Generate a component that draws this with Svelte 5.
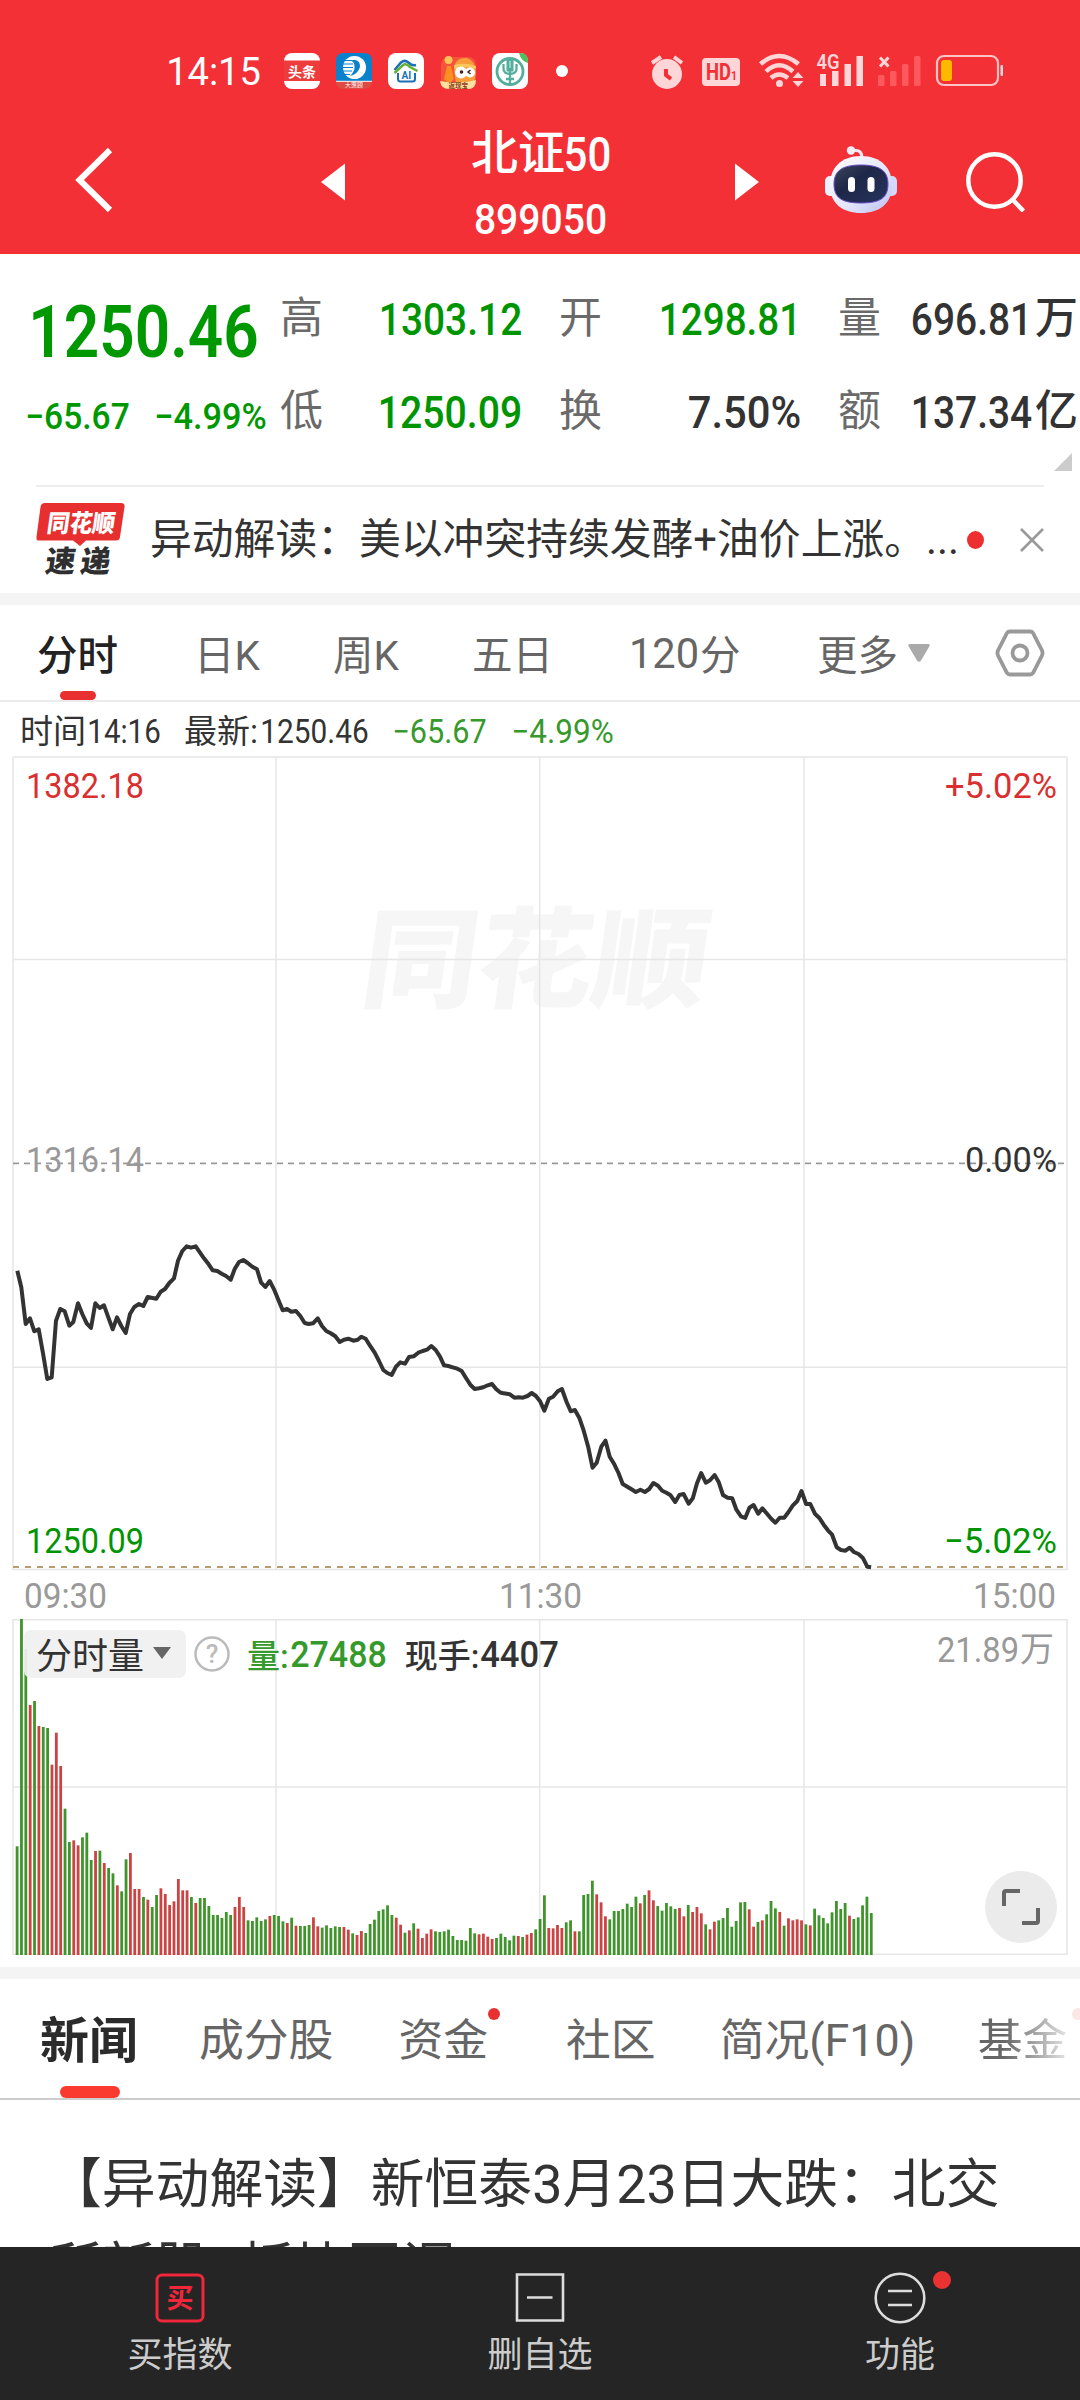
<script>
  const stats = [
    { label: '高', value: '1303.12', w: 139, tone: 'down' },
    { label: '开', value: '1298.81', w: 138, tone: 'down' },
    { label: '量', value: '696.81', w: 117, unit: '万' },
    { label: '低', value: '1250.09', w: 140, tone: 'down' },
    { label: '换', value: '7.50%', w: 109 },
    { label: '额', value: '137.34', w: 117, unit: '亿' }
  ];

  // Minute prices as chart coordinates (x, y), three units to a pixel.
  const morning = '52,212 64,262 77,372 90,355 103,394 116,388 129,460 142,537 155,532 168,362 181,327 194,334 208,377 220,366 234,310 247,342 260,370 273,384 286,310 299,324 312,316 325,352 338,388 351,352 364,378 377,399 390,342 403,321 417,312 430,318 443,291 469,296 482,275 495,267 508,249 522,235 534,182 547,153 560,139 573,143 587,139 612,175 626,193 638,211 652,213 665,221 678,228 692,239 704,207 717,186 730,180 743,189 757,200 771,208 783,247 796,261 809,243 822,268 835,299 848,331 861,327 874,335 888,333 901,348 914,369 926,372 939,370 953,355 966,378 979,393 992,400 1006,409 1019,426 1032,419 1045,416 1060,422 1073,419 1084,410 1097,416 1110,437 1124,458 1137,483 1150,510 1162,519 1175,525 1188,500 1201,487 1215,491 1227,471 1241,469 1255,458 1268,453 1281,449 1294,438 1307,450 1320,470 1332,496 1345,498 1358,502 1372,506 1385,513 1398,534 1411,554 1424,567 1437,565 1450,562 1463,556 1476,552 1489,568 1500,577'
    .split(' ').map((p) => p.split(',').map(Number)).map(([x, y]) => [x / 3, y / 3]);
  const afternoon = '58,579 78,583 90,593 101,592 112,593 124,588 135,579 146,588 157,604 168,632 180,596 191,590 203,574 214,567 226,605 237,634 248,630 260,655 271,692 283,742 294,803 305,788 317,740 328,722 339,770 351,793 362,819 373,852 385,860 396,868 407,876 419,869 431,876 442,867 453,849 465,857 476,872 487,878 498,886 510,906 521,885 532,882 545,911 556,895 567,850 578,819 590,848 601,841 613,825 624,847 635,885 647,893 659,895 670,929 682,949 693,954 704,923 715,915 727,941 738,925 749,940 761,956 772,968 783,953 795,953 806,936 817,917 829,903 840,873 852,912 863,912 875,941 886,953 898,974 909,991 920,1004 932,1042 943,1050 955,1052 966,1043 977,1056 989,1062 1000,1073 1012,1100 1022,1102'
    .split(' ').map((p) => p.split(',').map(Number)).map(([x, y]) => [480 + x / 2.613, y / 3]);
  const priceLine = [...morning, ...afternoon]
    .map(([x, y]) => x.toFixed(1) + ',' + (y + 450).toFixed(1))
    .join(' ');

  // Volume bars: top edge in thirds of a pixel, then the direction.
  const volumes = '769g 87g 177g 345r 333g 408r 411g 414g 524r 428r 528r 656g 756g 751r 766r 742g 728g 810g 783r 782g 819r 834g 850g 886r 904g 808g 789r 897r 897r 921g 929r 951g 915g 895r 912r 945r 934r 867r 901r 901r 921g 939r 924g 924g 948g 975g 975g 984g 966g 975g 951r 921r 951r 991g 993g 982g 993g 988g 978r 975g 978g 994g 999r 983g 1007r 1008g 1008g 1005g 982r 1009r 1013g 1006g 1014g 1009g 1011g 1011r 1019r 1030g 1035r 1023r 1029g 1002g 989g 963g 958g 946g 975g 983r 1004r 1028g 1021r 1000g 1016r 1044r 1031r 1018r 1024g 1026g 1024g 1019g 1038g 1050g 1050g 1052g 1014g 1030g 1033r 1031r 1040r 1047r 1044g 1031g 1041g 1051g 1037g 1038r 1041g 1034r 1029r 1018g 987g 916g 1014r 1015r 1005r 1014r 997g 991g 1024r 1024g 915g 912g 872g 913r 937r 979r 988g 963g 963g 957g 941g 951g 920g 940r 915g 901r 931r 948g 962g 939g 949g 957g 954r 979r 945g 966r 951r 970r 1003g 1018r 995r 991g 984g 954g 1010g 993g 937g 936g 958r 1010r 996g 991r 973g 933g 955g 966r 1007g 985r 991r 988r 991r 1003g 1006r 956g 976g 984g 1000g 967g 933g 957g 939g 977r 987g 982g 946g 920g 969g'
    .split(' ')
    .map((v, i) => ({
      x: 15.7 + i * 4.358,
      y: parseInt(v) / 3 - 29,
      color: v.endsWith('r') ? '#cc4343' : '#3f952b'
    }));
</script>

<!-- Condensed figures: the box is exactly the ink of the digits. -->
{#snippet num(text, w, cap, weight = 500)}
  <svg class="num" width={w} height={cap}>
    <text
      x={-cap * 0.07}
      y={cap}
      font-size={cap / 0.711}
      font-weight={weight}
      textLength={w + cap * 0.14}
      lengthAdjust="spacingAndGlyphs">{text}</text>
  </svg>
{/snippet}

{#snippet axis(text, x, y, w, color)}
  <text class="axis" {x} {y} fill={color} textLength={w} lengthAdjust="spacingAndGlyphs">{text}</text>
{/snippet}

<main class="screen">
  <header class="top">
    <div class="status">
      <div class="clock">{@render num('14:15', 91, 27, 400)}</div>
      <div class="apps">
        <svg width="36" height="36" viewBox="0 0 36 36">
          <rect width="36" height="36" rx="8" fill="#fff" />
          <rect y="7.500" width="36" height="20.500" fill="#ee3b3b" />
          <text x="4" y="23.500" font-size="14" font-weight="700" fill="#fff">头条</text>
        </svg>
        <svg width="36" height="36" viewBox="0 0 36 36">
          <path d="M8 0H28Q36 0 36 8V28H0V8Q0 0 8 0Z" fill="#0a82cb" />
          <path d="M0 28H36Q36 36 28 36H8Q0 36 0 28Z" fill="#dd4b43" />
          <path d="M0 28.300H36" stroke="#fff" />
          <circle cx="18.500" cy="14.500" r="11.500" fill="#fff" />
          <path d="M15 7H19Q24.500 8 24 14Q22 21 14 23Q19 18 18.500 13Q18 9 15 7Z" fill="#0a82cb" />
          <path d="M7 7.500H16M6 11H17M6 14.500H17M7 18H16M9 21.500H14" stroke="#0a82cb" stroke-width="1.200" />
          <text x="9" y="34.300" font-size="6" fill="#fff">大惠顾</text>
        </svg>
        <svg width="36" height="36" viewBox="0 0 36 36">
          <rect width="36" height="36" rx="8" fill="#fff" />
          <path d="M6.500 17L13 9.500Q17 6 21 10Q24 13 28 12" fill="none" stroke="#1b70b8" stroke-width="2.500" />
          <path d="M6.500 20L15 12Q18 10 22 14L29.500 18" fill="none" stroke="#65b232" stroke-width="2.500" />
          <path d="M10 20V26Q10 28.500 12.500 28.500H24.500Q27 28.500 27 26V20" fill="none" stroke="#1b70b8" stroke-width="2" />
          <text x="13.500" y="25.500" font-size="10" font-weight="700" fill="#1b70b8">AI</text>
        </svg>
        <svg width="36" height="36" viewBox="0 0 36 36">
          <rect x="1" y="4" width="35" height="32" rx="8" fill="#f5543a" />
          <path d="M14 18Q14 4 27 5Q36 8 36 20L34 30H16Z" fill="#f79d3a" />
          <path d="M14 12Q24 9 36 13V16Q24 12 14 16Z" fill="#fbc75c" />
          <circle cx="8.500" cy="7" r="4" fill="#fdc35a" />
          <path d="M7 13L4 26L9 31L14 26L11 13Z" fill="#fb8f21" />
          <circle cx="21" cy="19.500" r="6" fill="#fff" />
          <circle cx="30" cy="19.500" r="5" fill="#fff" />
          <circle cx="21.500" cy="19" r="1.800" fill="#3a2518" />
          <path d="M30.500 17L28 19L30.500 21" fill="none" stroke="#3a2518" stroke-width="1.500" />
          <path d="M0 28Q18 32 36 27Q36 36 28 36H9Q1 36 0 28Z" fill="#fce0a0" />
          <text x="8.500" y="34.800" font-size="6.500" font-weight="700" fill="#8b3d18">返现宝</text>
        </svg>
        <svg width="36" height="36" viewBox="0 0 36 36">
          <rect width="36" height="36" rx="8" fill="#fff" />
          <path d="M27 0H28Q36 0 36 8V10Q29 8 27 0Z" fill="#52bd5c" />
          <circle cx="18" cy="18.500" r="13" fill="none" stroke="#53ae9c" stroke-width="2.800" />
          <rect x="14.500" y="6" width="7" height="12.500" fill="#53ae9c" />
          <path d="M18 16V32M11.500 11V16Q11.500 20.500 18 21Q24.500 20.500 24.500 16V11M14 26H22" fill="none" stroke="#53ae9c" stroke-width="2.300" />
          <path d="M18 8V15" stroke="#d5f0ea" stroke-width="1" />
        </svg>
      </div>
      <i class="more-dot"></i>
      <svg class="system" width="360" height="40" viewBox="648 51 360 40" fill="#ffd6d7">
        <circle cx="667" cy="74" r="15" />
        <path d="M652 63L661 57M674 57L682 63" stroke="#ffd6d7" stroke-width="4" />
        <path d="M666 69V75L671 79" fill="none" stroke="#f23036" stroke-width="4" />
        <rect x="702" y="58" width="38" height="28" rx="4" />
        <text x="706" y="80" font-size="23" font-weight="700" fill="#f23036" textLength="25" lengthAdjust="spacingAndGlyphs">HD</text>
        <text x="731" y="80" font-size="13" font-weight="700" fill="#f23036" textLength="6" lengthAdjust="spacingAndGlyphs">1</text>
        <g fill="none" stroke="#ffd6d7" stroke-width="4.500">
          <path d="M760.500 64Q779 48 798.500 64" />
          <path d="M766 71.500Q779 59 793 71.500" />
          <path d="M771 78Q779 71 788 78" />
        </g>
        <circle cx="779.500" cy="83.500" r="3.500" />
        <path d="M792.500 78L798 72L803.500 78ZM792.500 81L798 87L803.500 81Z" />
        <text x="816.500" y="69" font-size="20.500" font-weight="600" textLength="23" lengthAdjust="spacingAndGlyphs">4G</text>
        <rect x="820" y="74" width="6" height="12" /><rect x="832" y="71" width="6.500" height="15" />
        <rect x="844.500" y="64" width="6.500" height="22" /><rect x="856.500" y="56" width="6.500" height="30" />
        <path d="M880 57.500L888.500 66.500M888.500 57.500L880 66.500" stroke="#ffd6d7" stroke-width="3" />
        <g fill="#ff595e">
          <rect x="878" y="75" width="6.500" height="11" rx="1.500" /><rect x="890" y="71" width="6.500" height="15" rx="1.500" />
          <rect x="902" y="64" width="6.500" height="22" rx="1.500" /><rect x="914" y="56" width="6.500" height="30" rx="1.500" />
        </g>
        <rect x="937" y="56" width="61" height="29" rx="7" fill="none" stroke="#ffc3c5" stroke-width="2.200" />
        <rect x="1000.500" y="65" width="2.500" height="11" rx="1" />
        <rect x="941" y="60" width="11" height="21" rx="3" fill="#ffba00" />
      </svg>
    </div>

    <nav class="nav">
      <svg class="back" width="40" height="66" viewBox="0 0 40 66">
        <path d="M35 3L4.500 33L35 63" fill="none" stroke="#fff" stroke-width="6" />
      </svg>
      <svg class="prev" width="24" height="38" viewBox="0 0 24 38"><path d="M0 19L24 0.500V37.500Z" fill="#fff" /></svg>
      <div class="title">
        <div class="name"><span>北证</span>{@render num('50', 43, 34)}</div>
        {@render num('899050', 129, 30)}
      </div>
      <svg class="next" width="24" height="38" viewBox="0 0 24 38"><path d="M24 19L0 0.500V37.500Z" fill="#fff" /></svg>
      <svg class="bot" width="72" height="68" viewBox="0 0 72 68">
        <defs>
          <linearGradient id="shell" x1="0" y1="0" x2="1" y2="1">
            <stop offset="0" stop-color="#fff" /><stop offset=".6" stop-color="#e2e4fa" /><stop offset="1" stop-color="#b9bff6" />
          </linearGradient>
          <linearGradient id="visor" x1="0" y1="0" x2="1" y2="1">
            <stop offset="0" stop-color="#3c465c" /><stop offset=".4" stop-color="#1e2747" /><stop offset="1" stop-color="#27345f" />
          </linearGradient>
        </defs>
        <path d="M37 12Q37 4 30 4.500" fill="none" stroke="#f1e9f6" stroke-width="3" />
        <circle cx="26" cy="4.500" r="4.200" fill="#f5eef8" />
        <rect x="0" y="30" width="12" height="20" rx="5" fill="#edf1ff" />
        <rect x="60" y="30" width="12" height="20" rx="5" fill="#d3d8fc" />
        <path d="M36 10C56 10 67 22 67 39C67 58 54 67 36 67C18 67 5 58 5 39C5 22 16 10 36 10Z" fill="url(#shell)" />
        <path d="M36 19C55 19 63 25 63 38C63 52 55 57 36 57C17 57 9 52 9 38C9 25 17 19 36 19Z" fill="url(#visor)" stroke="#6b4fc8" stroke-width="1" />
        <rect x="23" y="31" width="7" height="15" rx="3.500" fill="#fff" />
        <rect x="42.500" y="31" width="7" height="15" rx="3.500" fill="#fff" />
      </svg>
      <svg class="search" width="60" height="60" viewBox="0 0 60 60" fill="none" stroke="#fff" stroke-width="4.500">
        <circle cx="28.500" cy="28.500" r="26.200" />
        <path d="M47 48L57.500 59" />
      </svg>
    </nav>
  </header>

  <section class="quote">
    <div class="price">
      {@render num('1250.46', 223, 52, 600)}
      <div class="change">
        {@render num('−65.67', 101, 26)}
        {@render num('−4.99%', 109, 26)}
      </div>
    </div>
    <div class="stats">
      {#each stats as s}
        <div class="stat">
          <span class="key">{s.label}</span>
          <span class="value {s.tone ?? ''}">{@render num(s.value, s.w, 32)}{#if s.unit}<b>{s.unit}</b>{/if}</span>
        </div>
      {/each}
    </div>
    <svg class="corner" width="18" height="18"><path d="M18 0V18H0Z" fill="#ccc" /></svg>
  </section>

  <section class="flash">
    <svg class="brand" width="90" height="74" viewBox="0 0 90 74">
      <path d="M9 0H85Q89 0 88.500 4L84 34Q83.500 37.500 80 37.500H50L44 43L37 37.500H3Q0 37.500 0.500 34L4.500 4Q5 0 9 0Z" fill="#e72f30" />
      <text class="slant" x="10" y="28.500" font-size="24.500" fill="#fff" textLength="68" lengthAdjust="spacingAndGlyphs" transform="translate(4 0) skewX(-8)">同花顺</text>
      <text class="slant" font-size="30" y="69.500" fill="#2f2f31" textLength="65" transform="translate(18 0) skewX(-8)">速递</text>
    </svg>
    <p>异动解读：美以冲突持续发酵+油价上涨。...</p>
    <i class="red-dot"></i>
    <svg class="close" width="24" height="24"><path d="M1 1L23 23M23 1L1 23" stroke="#999" stroke-width="2.600" /></svg>
  </section>

  <nav class="periods">
    <span class="active">分时</span>
    <span class="p2">日K</span>
    <span class="p3">周K</span>
    <span class="p4">五日</span>
    <span class="p5">{@render num('120', 66, 30, 400)}分</span>
    <span class="p6">更多<svg width="22" height="18"><path d="M2 0H20Q23 0 21 3L13 16.500Q11 19 9 16.500L1 3Q-1 0 2 0Z" fill="#aaa" /></svg></span>
    <svg class="gear" width="50" height="48" viewBox="0 0 50 48" fill="none" stroke="#999" stroke-width="3.800">
      <path d="M15 2.500H35Q37 2.500 38 4L47 21.500Q48 24 47 26.500L38 44Q37 45.500 35 45.500H15Q13 45.500 12 44L3 26.500Q2 24 3 21.500L12 4Q13 2.500 15 2.500Z" />
      <circle cx="25" cy="24" r="7.500" />
    </svg>
  </nav>

  <div class="readout">
    <span>时间</span>{@render num('14:16', 70, 24, 450)}
    <span class="latest">最新:</span>{@render num('1250.46', 105, 24, 450)}
    <div class="delta">{@render num('−65.67', 91, 24, 450)}{@render num('−4.99%', 99, 24, 450)}</div>
  </div>

  <svg class="price-chart" width="1080" height="869" viewBox="0 0 1080 869">
    <text class="watermark" x="360" y="249.500" textLength="346" lengthAdjust="spacingAndGlyphs" transform="translate(33 0) skewX(-8)">同花顺</text>
    <g stroke="#e6e6e6" stroke-width="1.500" fill="none">
      <rect x="13" y="7" width="1054" height="812.500" />
      <path d="M276 7V819M539.700 7V819M804 7V819M13 209.500H1067M13 617.300H1067" />
    </g>
    <path d="M13 413.300H1064" stroke="#999" stroke-width="1.800" stroke-dasharray="6 5" />
    <path d="M13 817H1064" stroke="#b99c72" stroke-width="2" stroke-dasharray="6 6" />
    <polyline points={priceLine} fill="none" stroke="#333" stroke-width="4" stroke-linejoin="round" />
    {@render axis('1382.18', 26, 48, 118, '#d92f2f')}
    {@render axis('+5.02%', 945, 48, 112, '#d92f2f')}
    {@render axis('1316.14', 26, 421.5, 118, '#999')}
    {@render axis('0.00%', 965, 421.5, 92, '#333')}
    {@render axis('1250.09', 26, 802.5, 118, '#009500')}
    {@render axis('−5.02%', 944, 802.5, 113, '#009500')}
    {@render axis('09:30', 24, 857.500, 83, '#999')}
    {@render axis('11:30', 499, 857.500, 83, '#999')}
    {@render axis('15:00', 973, 857.500, 83, '#999')}
  </svg>

  <section class="volume">
    <svg width="1080" height="337" viewBox="0 0 1080 337">
      <g stroke="#e6e6e6" stroke-width="1.500" fill="none">
        <rect x="13" y="0.750" width="1054" height="334.500" />
        <path d="M276 0V335M539.700 0V335M804 0V335M13 168H1067" />
      </g>
      {#each volumes as v}
        <rect x={v.x} y={v.y} width="2.800" height={336 - v.y} fill={v.color} />
      {/each}
      {@render axis('21.89', 937, 42.500, 82, '#999')}
      <text x="1020" y="41.500" font-size="34" fill="#999">万</text>
    </svg>
    <div class="legend">
      <span class="picker">分时量<svg width="18" height="12"><path d="M0 0H18L9 12Z" fill="#666" /></svg></span>
      <svg class="help" width="36" height="36">
        <circle cx="18" cy="18" r="16.500" fill="none" stroke="#bbb" stroke-width="2.500" />
        <text x="18" y="27" text-anchor="middle" font-size="26" fill="#bbb">?</text>
      </svg>
      <span class="vol">量:{@render num('27488', 93, 26)}</span>
      <span class="hand">现手:{@render num('4407', 75, 26)}</span>
    </div>
    <button class="expand" aria-label="全屏">
      <svg width="40" height="38" viewBox="0 0 40 38" fill="none" stroke="#666" stroke-width="4">
        <path d="M3 18V5Q3 3 5 3H19M37 20V33Q37 35 35 35H21" />
      </svg>
    </button>
  </section>

  <nav class="tabs">
    <span class="active">新闻</span>
    <span class="t2">成分股</span>
    <span class="t3">资金<i></i></span>
    <span class="t4">社区</span>
    <span class="t5">简况(F10)</span>
    <span class="t6">基金<i></i></span>
  </nav>

  <article class="news">【异动解读】新恒泰3月23日大跌：北交<br />所新股+板块回调</article>

  <footer class="actions">
    <div>
      <svg width="54" height="54" viewBox="0 0 54 54">
        <rect x="4" y="4" width="46" height="46" rx="5" fill="none" stroke="#f0273b" stroke-width="3" />
        <text x="27" y="37" text-anchor="middle" font-size="27" font-weight="700" fill="#f0273b">买</text>
      </svg>
      <span>买指数</span>
    </div>
    <div>
      <svg width="54" height="54" viewBox="0 0 54 54" fill="none" stroke="#ddd" stroke-width="2.600">
        <path d="M4 3.500H50V49.500H4ZM14 26.500H39.500" />
      </svg>
      <span>删自选</span>
    </div>
    <div>
      <svg width="54" height="54" viewBox="0 0 54 54" fill="none" stroke="#ddd" stroke-width="2.600">
        <circle cx="27" cy="27" r="24.300" />
        <path d="M15 20H39M15 34H39" />
      </svg>
      <i></i>
      <span>功能</span>
    </div>
  </footer>
</main>

<style>
  :global(body) { background: #fff; }
  .screen {
    width: 1080px;
    height: 2400px;
    overflow: hidden;
    display: flex;
    flex-direction: column;
    background: #fff;
    color: #333;
    font-family: Roboto, 'Noto Sans CJK SC', sans-serif;
  }
  .screen > * { flex: none; box-sizing: border-box; }
  svg { display: block; flex: none; }
  i { display: block; border-radius: 50%; }
  .num { overflow: visible; fill: currentColor; font-family: Roboto, sans-serif; }
  .axis { font: 450 35px Roboto, sans-serif; }

  .top { height: 254px; background: #f23036; color: #fff; }
  .status { display: flex; align-items: center; height: 36px; padding-top: 53px; }
  .clock { margin-left: 168px; }
  .apps { display: flex; gap: 16px; margin-left: 25px; }
  .more-dot { width: 12px; height: 12px; margin-left: 28px; background: #fff; }
  .system { margin-left: 80px; }
  .nav { display: flex; align-items: center; height: 148px; padding-top: 17px; }
  .back { margin-left: 75px; }
  .prev { margin: 4px 0 0 206px; }
  .title {
    width: 200px;
    margin: 0 95px;
    display: flex;
    flex-direction: column;
    align-items: center;
    gap: 26px;
    padding-top: 4px;
  }
  .name { display: flex; align-items: center; gap: 1px; height: 48px; font-size: 47px; line-height: 48px; font-weight: 500; }
  .name span { margin-top: -2px; }
  .next { margin-top: 4px; }
  .bot { margin-left: 66px; }
  .search { margin-left: 69px; margin-top: 4px; }

  .quote { height: 231px; display: grid; grid-template-columns: 280px 1fr; position: relative; }
  .price { color: #009800; padding: 51px 0 0 32px; }
  .change { display: flex; gap: 28px; margin: 46px 0 0 -5px; }
  .stats { display: grid; grid-template-columns: repeat(3, 240px); column-gap: 39px; grid-auto-rows: 93px; padding-top: 18px; }
  .stat { display: flex; justify-content: space-between; align-items: center; }
  .key { font-size: 43px; color: #6a6a6a; line-height: 1; }
  .value { display: flex; align-items: center; gap: 5px; }
  .value b { font-size: 43px; font-weight: 500; line-height: 1; }
  .down { color: #009500; }
  .corner { position: absolute; right: 8px; bottom: 14px; }

  .flash {
    height: 108px;
    margin: 0 36px;
    border-top: 2px solid #ededed;
    display: flex;
    align-items: center;
  }
  .flash p { margin: 0 0 0 24px; width: 809px; font-size: 41.800px; white-space: nowrap; line-height: 1; }
  .slant { font-family: 'Noto Sans CJK SC', sans-serif; font-weight: 900; }
  .red-dot { width: 18px; height: 18px; background: #ee2f30; margin-left: 8px; }
  .close { margin-left: 36px; }

  .periods {
    height: 109px;
    border-top: 12px solid #f4f4f4;
    border-bottom: 2px solid #ebebeb;
    padding-left: 37px;
    display: flex;
    align-items: center;
    font-size: 40.500px;
    color: #666;
    white-space: nowrap;
  }
  .periods span { display: flex; align-items: center; height: 95px; }
  .periods .active { color: #222; font-weight: 500; width: 81px; position: relative; }
  .periods .active::after {
    content: '';
    position: absolute;
    left: 23px;
    bottom: 0;
    width: 36px;
    height: 9px;
    border-radius: 5px;
    background: #e93030;
  }
  .p2 { width: 64px; margin-left: 76px; }
  .p3 { width: 67px; margin-left: 75px; }
  .p4 { width: 81px; margin-left: 72px; }
  .p5 { width: 110px; margin-left: 78px; gap: 3px; }
  .p6 { margin-left: 76px; gap: 10px; }
  .gear { margin-left: 65px; }

  .readout { height: 48px; display: flex; align-items: center; padding: 10px 0 0 20px; font-size: 33px; line-height: 1; }
  .readout span { margin-right: 3px; }
  .readout .latest { margin-left: 25px; margin-right: 4px; }
  .delta { display: flex; gap: 28px; margin-left: 27px; color: #36992b; }
  .watermark { font: 900 109px 'Noto Sans CJK SC', sans-serif; fill: #f6f6f6; }

  .volume { height: 348px; position: relative; }
  .legend { position: absolute; left: 24px; top: 11px; height: 48px; display: flex; align-items: center; font-size: 33px; font-weight: 500; }
  .picker {
    width: 162px;
    height: 48px;
    box-sizing: border-box;
    padding: 0 0 2px 12px;
    display: flex;
    align-items: center;
    gap: 9px;
    border-radius: 7px;
    background: rgba(240, 240, 240, .93);
    font-size: 36px;
    font-weight: 400;
  }
  .help { margin-left: 8px; }
  .vol, .hand { display: flex; align-items: center; gap: 3px; }
  .vol { margin-left: 17px; color: #36992b; }
  .hand { margin-left: 20px; }
  .expand {
    position: absolute;
    left: 985px;
    top: 252px;
    width: 72px;
    height: 72px;
    padding: 0;
    border: 0;
    border-radius: 50%;
    background: #ebebeb;
    display: grid;
    place-items: center;
  }

  .tabs {
    height: 133px;
    border-top: 12px solid #f4f4f4;
    border-bottom: 2px solid #ccc;
    padding-left: 40px;
    display: flex;
    align-items: center;
    font-size: 44.800px;
    color: #666;
    white-space: nowrap;
  }
  .tabs span { position: relative; display: flex; align-items: center; height: 119px; padding-bottom: 4px; box-sizing: border-box; }
  .tabs .active { width: 98px; font-size: 49px; font-weight: 600; color: #2b2b2b; }
  .tabs .active::after {
    content: '';
    position: absolute;
    left: 20px;
    bottom: 0;
    width: 60px;
    height: 12px;
    border-radius: 6px;
    background: #fb3a2f;
  }
  .t2 { width: 135px; margin-left: 61px; }
  .t3 { width: 90px; margin-left: 65px; }
  .t4 { width: 90px; margin-left: 78px; }
  .t5 { width: 195px; margin-left: 64px; }
  .tabs .t6 {
    width: 104px;
    margin-left: 63px;
    mask-image: linear-gradient(to right, #000 25%, rgba(0, 0, 0, .12) 92%);
  }
  .tabs i { position: absolute; left: 90px; top: 29px; width: 12px; height: 12px; background: #e93030; }
  .tabs .t6 i { left: 94px; }

  .news { height: 147px; overflow: hidden; padding: 43px 0 0 48px; font-size: 53.800px; line-height: 83px; white-space: nowrap; }

  .actions { height: 153px; background: #252525; color: #ccc; display: grid; grid-template-columns: repeat(3, 1fr); }
  .actions div { position: relative; display: flex; flex-direction: column; align-items: center; padding-top: 24px; gap: 13px; }
  .actions span { font-size: 35px; line-height: 36px; }
  .actions i { position: absolute; left: 213px; top: 24px; width: 18px; height: 18px; background: #ea3232; }
</style>
